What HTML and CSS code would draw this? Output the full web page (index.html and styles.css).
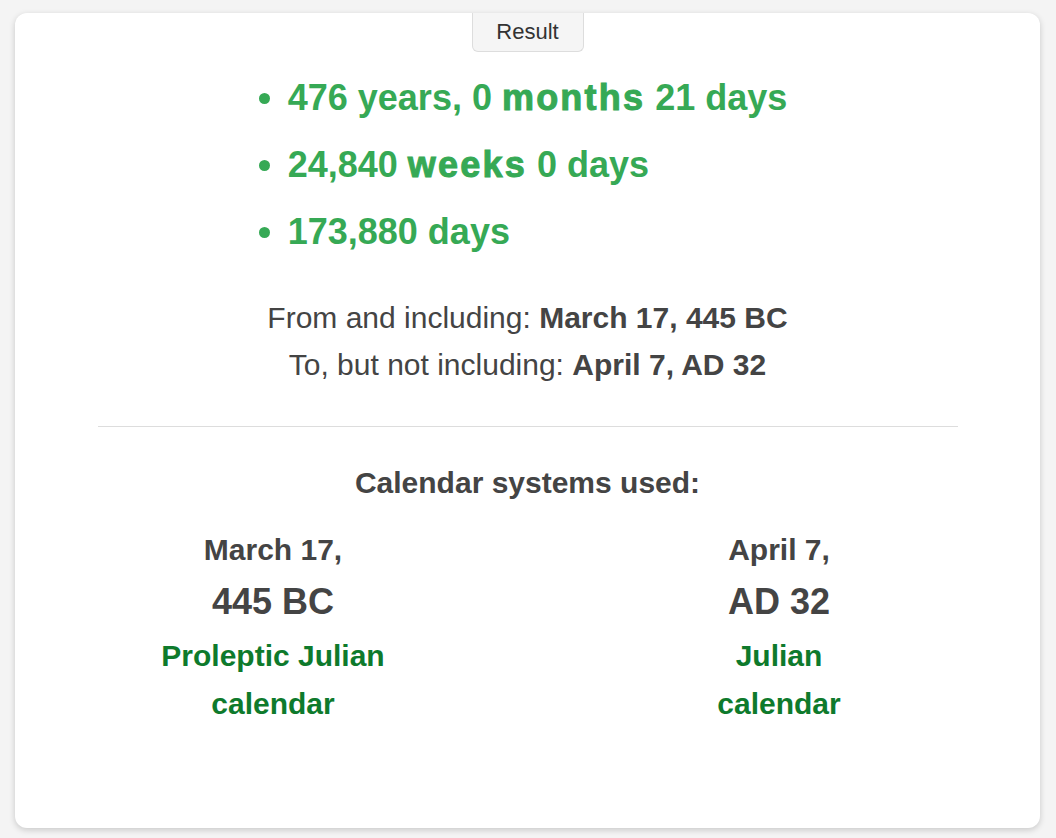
FILE: index.html
```html
<!DOCTYPE html>
<html>
<head>
<meta charset="utf-8">
<link rel="stylesheet" href="styles.css">
</head>
<body>
<div class="card">
  <div class="tab">Result</div>
  <div class="results">
    <ul class="durations">
      <li>476 years, 0 <span class="unit">months</span> 21 days</li>
      <li>24,840 <span class="unit">weeks</span> 0 days</li>
      <li>173,880 days</li>
    </ul>
  </div>
  <div class="range">
    <p>From and including: <b>March 17, 445 BC</b></p>
    <p>To, but not including: <b>April 7, AD 32</b></p>
  </div>
  <hr class="divider">
  <h2 class="cal-title">Calendar systems used:</h2>
  <div class="cal-grid">
    <div class="cal-col">
      <div class="date-md">March 17,</div>
      <div class="date-y">445 BC</div>
      <div class="cal-name">Proleptic Julian<br>calendar</div>
    </div>
    <div class="cal-col">
      <div class="date-md">April 7,</div>
      <div class="date-y">AD 32</div>
      <div class="cal-name">Julian<br>calendar</div>
    </div>
  </div>
</div>
</body>
</html>
```

FILE: styles.css
```css
html, body {
  margin: 0;
  padding: 0;
}
body {
  background: #f4f4f4;
  font-family: "Liberation Sans", Arial, sans-serif;
  color: #444;
  padding: 13px 16px 10px 15px;
}
.card {
  background: #fff;
  border-radius: 12px;
  box-shadow: 0 2px 6px rgba(0, 0, 0, 0.18);
  height: 815px;
  box-sizing: border-box;
  display: flex;
  flex-direction: column;
  align-items: center;
}
.tab {
  width: 112px;
  height: 39px;
  box-sizing: border-box;
  background: #f5f5f5;
  border: 1px solid #ddd;
  border-top: none;
  border-radius: 0 0 6px 6px;
  font-size: 22px;
  line-height: 38px;
  text-align: center;
  color: #333;
}
.results {
  margin-top: 12px;
}
.durations {
  margin: 0;
  padding-left: 20px;
  color: #36a955;
  font-weight: bold;
  font-size: 36px;
  line-height: 67px;
}
.unit {
  letter-spacing: 2.2px;
  -webkit-text-stroke: 1px #36a955;
}
.range {
  margin-top: 29px;
  text-align: center;
  font-size: 30px;
  line-height: 47px;
}
.range p {
  margin: 0;
}
.divider {
  width: 860px;
  margin: 38px 0 0;
  border: none;
  border-top: 1px solid #ddd;
}
.cal-title {
  margin: 36px 0 0;
  font-size: 30px;
  line-height: 40px;
  font-weight: bold;
  text-align: center;
}
.cal-grid {
  margin-top: 23px;
  align-self: stretch;
  padding: 0 8px 0 5px;
  display: grid;
  grid-template-columns: 1fr 1fr;
  text-align: center;
  font-weight: bold;
}
.date-md {
  font-size: 30px;
  line-height: 48px;
}
.date-y {
  font-size: 36px;
  line-height: 56px;
}
.cal-name {
  margin-top: 2px;
  font-size: 30px;
  line-height: 48px;
  color: #0e7a2c;
}
```
